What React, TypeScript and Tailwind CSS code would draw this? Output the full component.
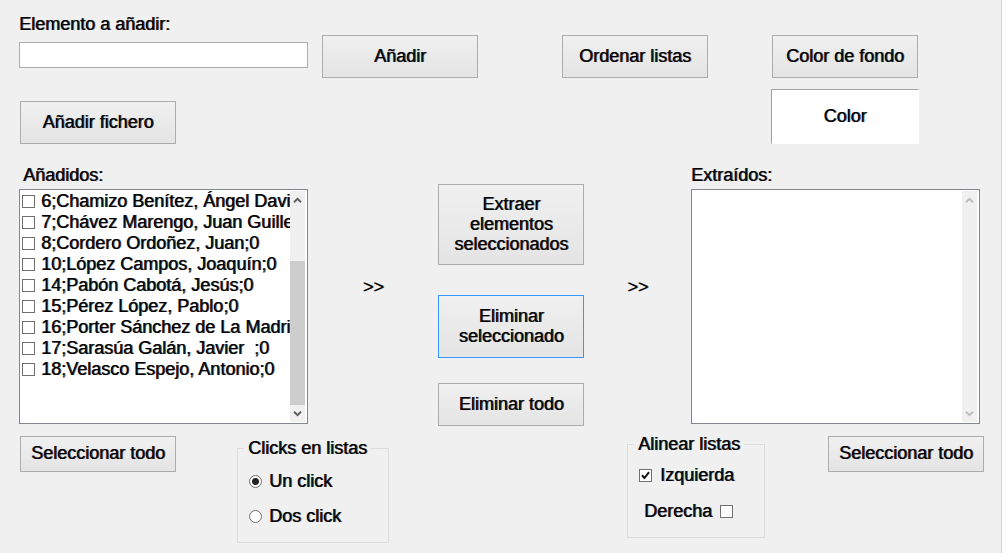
import { useState } from "react";
import type { ReactNode } from "react";

const ADDED = [
  "6;Chamizo Benítez, Ángel David;0",
  "7;Chávez Marengo, Juan Guillermo;0",
  "8;Cordero Ordoñez, Juan;0",
  "10;López Campos, Joaquín;0",
  "14;Pabón Cabotá, Jesús;0",
  "15;Pérez López, Pablo;0",
  "16;Porter Sánchez de La Madrid;0",
  "17;Sarasúa Galán, Javier  ;0",
  "18;Velasco Espejo, Antonio;0",
];

type ButtonProps = { children: ReactNode; className: string; focused?: boolean };

function Button({ children, className, focused = false }: ButtonProps) {
  return (
    <button
      type="button"
      className={`shrink-0 border bg-linear-to-b from-[#f0f0f0] to-[#e4e4e4] pb-0.5 text-center [text-shadow:1px_0_0_#000000b0] ${
        focused ? "border-[#3399ff]" : "border-[#acacac]"
      } ${className}`}
    >
      {children}
    </button>
  );
}

type CheckProps = { id: string; checked: boolean; onChange: () => void };

function CheckBox({ id, checked, onChange }: CheckProps) {
  return (
    <span className="relative block size-[13px] shrink-0">
      <input
        id={id}
        type="checkbox"
        checked={checked}
        onChange={onChange}
        className="block size-[13px] appearance-none border border-[#707070] bg-white"
      />
      {checked && (
        <svg viewBox="0 0 13 13" className="pointer-events-none absolute inset-0 size-[13px]" fill="none">
          <path d="M3 6.3 5.5 9 10 3.2" stroke="#111" strokeWidth="2" />
        </svg>
      )}
    </span>
  );
}

function Arrow({ down = false, muted = false }: { down?: boolean; muted?: boolean }) {
  return (
    <svg viewBox="0 0 15 17" className="h-[17px] w-[15px]" fill="none">
      <path
        d={down ? "M4 6.7 7.5 10.2 11 6.7" : "M4 11.3 7.5 7.8 11 11.3"}
        stroke={muted ? "#bfbfbf" : "#606060"}
        strokeWidth="2"
      />
    </svg>
  );
}

function ScrollBar({ active = false }: { active?: boolean }) {
  return (
    <div className="flex w-[15px] shrink-0 flex-col bg-[#f0f0f0]">
      <button type="button" aria-label="Subir">
        <Arrow muted={!active} />
      </button>
      <div className="flex flex-1 flex-col justify-end">
        {active && <div className="h-[144px] bg-[#cdcdcd]" />}
      </div>
      <button type="button" aria-label="Bajar">
        <Arrow down muted={!active} />
      </button>
    </div>
  );
}

type ListPanelProps = { title: string; titleClass: string; children?: ReactNode; active?: boolean };

function ListPanel({ title, titleClass, children, active }: ListPanelProps) {
  return (
    <section className="w-[289px] shrink-0" aria-label={title}>
      <h2 className={titleClass}>{title}</h2>
      <div className="mt-1 flex h-[235px] border border-[#828790] bg-white px-0.5 py-px">
        <ul className="min-w-0 flex-1 overflow-hidden">{children}</ul>
        <ScrollBar active={active} />
      </div>
    </section>
  );
}

function Radio({ id, label, checked, onChange }: CheckProps & { label: string }) {
  return (
    <div className="flex items-center gap-[7px]">
      <input
        id={id}
        type="radio"
        name="clicks"
        checked={checked}
        onChange={onChange}
        className="size-[13px] appearance-none rounded-full border border-[#707070] bg-white checked:bg-[radial-gradient(circle,#222_3px,#fff_4px)]"
      />
      <label htmlFor={id}>{label}</label>
    </div>
  );
}

export default function App() {
  const [selected, setSelected] = useState<string[]>([]);
  const [clicks, setClicks] = useState(1);
  const [align, setAlign] = useState("left");

  const toggle = (item: string) =>
    setSelected((s) => (s.includes(item) ? s.filter((i) => i !== item) : [...s, item]));

  return (
    <div className="min-h-screen bg-[#fcfcfc] pr-1 font-['Liberation_Sans',Arial,sans-serif] text-[18px] leading-5 text-black [text-shadow:1px_0_0_#000000b0]">
      <main className="min-h-screen border-r border-[#d4d4d4] bg-[#f0f0f0] pt-3.5 pl-[19px]">
        <div className="flex items-end justify-between pr-[83px]">
          <div className="flex items-end gap-3.5">
            <div className="flex w-[289px] flex-col gap-2 pb-2.5">
              <label htmlFor="elemento">Elemento a añadir:</label>
              <input id="elemento" type="text" className="h-[26px] border border-[#abadb3] bg-white px-1 outline-none" />
            </div>
            <Button className="h-[43px] w-[156px]">Añadir</Button>
          </div>
          <div className="flex gap-16">
            <Button className="h-[43px] w-[146px]">Ordenar listas</Button>
            <Button className="h-[43px] w-[146px]">Color de fondo</Button>
          </div>
        </div>

        <div className="mt-[11px] flex items-end justify-between pr-[82px] pl-px">
          <Button className="h-[43px] w-[156px]">Añadir fichero</Button>
          <div className="flex h-[55px] w-[148px] items-center justify-center border border-t-[#a0a0a0] border-r-white border-b-white border-l-[#a0a0a0] bg-white pb-0.5">
            Color
          </div>
        </div>

        <div className="mt-[21px] flex pr-[21px]">
          <ListPanel title="Añadidos:" titleClass="pl-1" active>
            {ADDED.map((item, i) => (
              <li key={item} className="flex h-[21px] items-center gap-1.5">
                <CheckBox id={`item-${i}`} checked={selected.includes(item)} onChange={() => toggle(item)} />
                <label htmlFor={`item-${i}`} className="pb-0.5 whitespace-pre">
                  {item}
                </label>
              </li>
            ))}
          </ListPanel>
          <div className="flex-[11] pt-28 text-center">&gt;&gt;</div>
          <div className="flex w-[146px] shrink-0 flex-col pt-[19px]">
            <Button className="h-[81px] px-2">Extraer elementos seleccionados</Button>
            <Button focused className="mt-[30px] h-[63px] px-2">
              Eliminar seleccionado
            </Button>
            <Button className="mt-[25px] h-[43px]">Eliminar todo</Button>
          </div>
          <div className="flex-[9] pt-28 text-center">&gt;&gt;</div>
          <ListPanel title="Extraídos:" titleClass="" />
        </div>

        <div className="mt-2 flex items-start justify-between pr-[17px] pl-px">
          <div className="flex items-start gap-[61px]">
            <Button className="mt-0.5 h-9 w-[156px]">Seleccionar todo</Button>
            <fieldset className="mt-1 w-[152px] border border-[#dcdcdc] px-1.5 pb-4">
              <legend className="px-1">Clicks en listas</legend>
              <div className="flex flex-col gap-[15px] pt-[13px] pl-[5px]">
                <Radio id="un" label="Un click" checked={clicks === 1} onChange={() => setClicks(1)} />
                <Radio id="dos" label="Dos click" checked={clicks === 2} onChange={() => setClicks(2)} />
              </div>
            </fieldset>
          </div>
          <div className="flex items-start gap-[63px]">
            <fieldset className="w-[138px] border border-[#dcdcdc] px-1.5 pb-4">
              <legend className="px-1">Alinear listas</legend>
              <div className="flex flex-col gap-4 pt-[11px] pl-[5px]">
                <div className="flex items-center gap-2">
                  <CheckBox id="izq" checked={align === "left"} onChange={() => setAlign("left")} />
                  <label htmlFor="izq">Izquierda</label>
                </div>
                <div className="flex items-center gap-2 pl-[5px]">
                  <label htmlFor="der">Derecha</label>
                  <CheckBox id="der" checked={align === "right"} onChange={() => setAlign("right")} />
                </div>
              </div>
            </fieldset>
            <Button className="mt-0.5 h-9 w-[156px]">Seleccionar todo</Button>
          </div>
        </div>
      </main>
    </div>
  );
}
